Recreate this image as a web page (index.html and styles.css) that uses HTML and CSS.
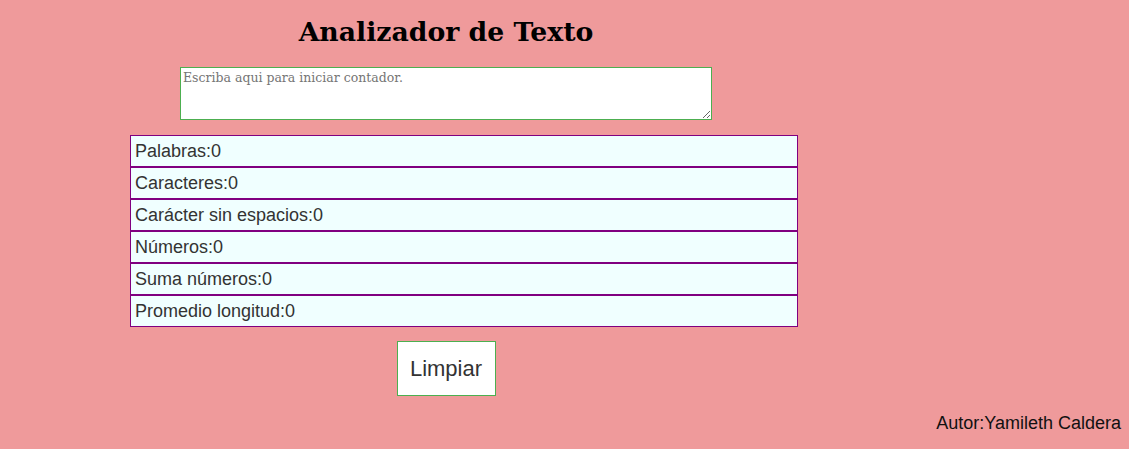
FILE: index.html
```html
<!DOCTYPE html>
<html lang="es">
<head>
<meta charset="utf-8">
<title>Analizador de Texto</title>
<link rel="stylesheet" href="styles.css">
</head>
<body>
<main class="app">
  <h1 class="title">Analizador de Texto</h1>
  <div class="input-wrap">
    <textarea class="input" placeholder="Escriba aqui para iniciar contador."></textarea>
  </div>
  <ul class="stats">
    <li class="stat">Palabras:0</li>
    <li class="stat">Caracteres:0</li>
    <li class="stat">Carácter sin espacios:0</li>
    <li class="stat">Números:0</li>
    <li class="stat">Suma números:0</li>
    <li class="stat">Promedio longitud:0</li>
  </ul>
  <div class="actions">
    <button class="btn" type="button">Limpiar</button>
  </div>
</main>
<footer class="footer">Autor:Yamileth Caldera</footer>
</body>
</html>
```

FILE: styles.css
```css
html, body {
  margin: 0;
  padding: 0;
}
body {
  background: #ef9a9b;
  font-family: "Liberation Sans", Arial, sans-serif;
  color: #333;
  height: 449px;
  overflow: hidden;
}
.app {
  width: 892px;
  padding-top: 14px;
}
.title {
  margin: 0;
  text-align: center;
  font-family: "DejaVu Serif", Georgia, serif;
  font-weight: bold;
  font-size: 26.7px;
  line-height: 36px;
  color: #000;
}
.input-wrap {
  display: flex;
  justify-content: center;
  margin-top: 17px;
}
.input {
  box-sizing: border-box;
  width: 532px;
  height: 53px;
  border: 1px solid #4caf50;
  padding: 2px;
  font-family: "DejaVu Serif", Georgia, serif;
  font-size: 12.5px;
  background: #fff;
  margin: 0;
  display: block;
}
.input::placeholder {
  color: #757575;
}
.stats {
  list-style: none;
  margin: 15px 0 0 130px;
  padding: 0;
  width: 668px;
}
.stat {
  box-sizing: border-box;
  height: 32px;
  border: 1px solid #800080;
  background: #f0ffff;
  padding: 0 4px;
  font-size: 18px;
  line-height: 30px;
  color: #333;
}
.actions {
  display: flex;
  justify-content: center;
  margin-top: 14px;
}
.btn {
  box-sizing: border-box;
  width: 99px;
  height: 55px;
  background: #fff;
  border: 1px solid #4caf50;
  font-family: "Liberation Sans", Arial, sans-serif;
  font-size: 22px;
  color: #333;
  padding: 0;
  margin: 0;
}
.footer {
  text-align: right;
  padding-right: 8px;
  margin-top: 17px;
  font-size: 18px;
  color: #111;
}
```
